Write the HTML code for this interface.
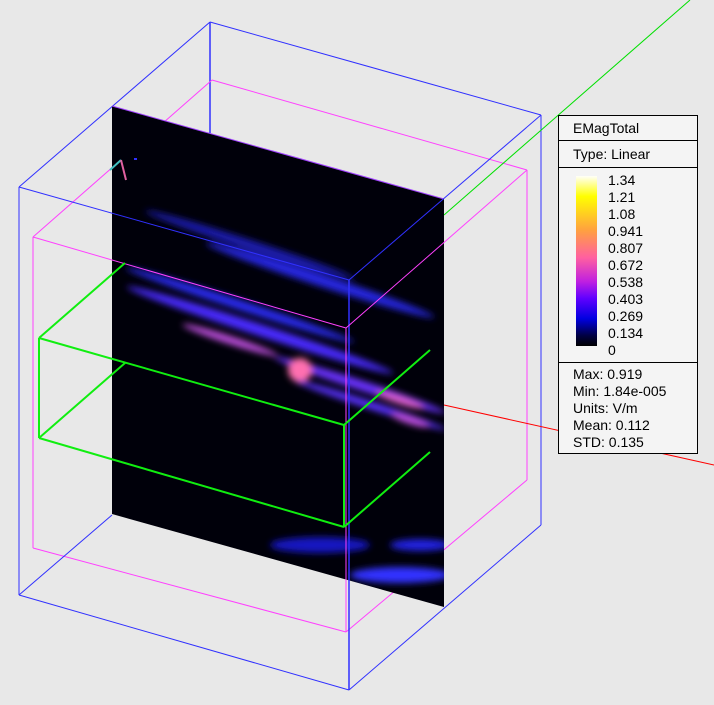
<!DOCTYPE html>
<html><head><style>
body{margin:0;background:#e8e8e8;width:714px;height:705px;overflow:hidden;position:relative;font-family:"Liberation Sans",sans-serif}
.leg{position:absolute;left:558px;top:115px;width:140px;height:339px;background:#f4f4f4;border:1px solid #000;box-sizing:border-box;font-size:14px;color:#000}
.leg div{position:absolute;left:0;right:0}
</style></head><body>
<svg width="714" height="705" style="position:absolute;left:0;top:0">
<defs>
<filter id="b" x="-20%" y="-20%" width="140%" height="140%"><feGaussianBlur stdDeviation="3.5"/></filter>
<clipPath id="c"><polygon points="112,106 444,199 444,607 112,514"/></clipPath>
</defs>
<g fill="none" stroke-width="1">
<line x1="210" y1="22" x2="541" y2="115" stroke="#3030ff"/>
<line x1="210" y1="22" x2="19" y2="187" stroke="#3030ff"/>
<line x1="210" y1="22" x2="210" y2="133" stroke="#3030ff" stroke-width="1.5"/>
<line x1="541" y1="115" x2="541" y2="525" stroke="#3030ff"/>
<line x1="212" y1="80" x2="527" y2="170" stroke="#ff40ff"/>
<line x1="212" y1="80" x2="33" y2="237" stroke="#ff40ff"/>
<line x1="527" y1="170" x2="527" y2="480" stroke="#ff40ff"/>
<line x1="527" y1="480" x2="346" y2="632" stroke="#ff40ff"/>
<line x1="33" y1="237" x2="33" y2="548" stroke="#ff40ff"/>
<line x1="33" y1="548" x2="346" y2="632" stroke="#ff40ff"/>
<line x1="19" y1="187" x2="19" y2="595" stroke="#3030ff"/>
<line x1="19" y1="595" x2="349" y2="690" stroke="#3030ff"/>
<line x1="541" y1="525" x2="349" y2="690" stroke="#3030ff"/>
<line x1="19" y1="595" x2="112" y2="515" stroke="#3030ff"/>
<line x1="444" y1="215" x2="690" y2="0" stroke="#00e000"/>
<line x1="444" y1="405" x2="714" y2="465" stroke="#ff0000"/>
</g>
<polygon points="112,106 444,199 444,607 112,514" fill="#00000a"/>
<g clip-path="url(#c)" filter="url(#b)">
<ellipse cx="250" cy="245" rx="110" ry="5" fill="#1a1ab0" transform="rotate(18 250 245)"/>
<ellipse cx="320" cy="280" rx="120" ry="6" fill="#2525e0" transform="rotate(18 320 280)"/>
<ellipse cx="240" cy="305" rx="120" ry="5" fill="#2a2af0" transform="rotate(18 240 305)"/>
<ellipse cx="260" cy="330" rx="140" ry="6" fill="#4a2cff" transform="rotate(18 260 330)"/>
<ellipse cx="230" cy="340" rx="50" ry="4" fill="#c050e0" transform="rotate(18 230 340)"/>
<ellipse cx="360" cy="385" rx="90" ry="5" fill="#6a30ff" transform="rotate(18 360 385)"/>
<ellipse cx="370" cy="405" rx="80" ry="4" fill="#5a30ff" transform="rotate(18 370 405)"/>
<ellipse cx="300" cy="370" rx="12" ry="12" fill="#ff70b0"/>
<ellipse cx="400" cy="400" rx="25" ry="4" fill="#e060d0" transform="rotate(18 400 400)"/>
<ellipse cx="410" cy="420" rx="20" ry="4" fill="#c050e0" transform="rotate(18 410 420)"/>
<ellipse cx="320" cy="545" rx="50" ry="8" fill="#1515c0"/>
<ellipse cx="400" cy="575" rx="50" ry="8" fill="#3030ff"/>
<ellipse cx="420" cy="545" rx="30" ry="6" fill="#2020e0"/>
</g>
<line x1="112" y1="106" x2="444" y2="199" stroke="#a040ff"/>
<g fill="none">
<line x1="19" y1="187" x2="349" y2="280" stroke="#3030ff"/>
<line x1="541" y1="115" x2="349" y2="280" stroke="#3030ff"/>
<line x1="349" y1="280" x2="349" y2="690" stroke="#3030ff" stroke-width="1.5"/>
<line x1="33" y1="237" x2="346" y2="328" stroke="#ff40ff"/>
<line x1="527" y1="170" x2="346" y2="328" stroke="#ff40ff"/>
<line x1="346" y1="328" x2="346" y2="632" stroke="#ff40ff"/>
<g stroke="#10ee10" stroke-width="2">
<line x1="39" y1="338" x2="344" y2="425"/>
<line x1="39" y1="338" x2="39" y2="438"/>
<line x1="39" y1="438" x2="344" y2="527"/>
<line x1="344" y1="425" x2="344" y2="527"/>
<line x1="344" y1="425" x2="430" y2="350"/>
<line x1="344" y1="527" x2="430" y2="452"/>
<line x1="39" y1="338" x2="125" y2="263"/>
<line x1="39" y1="438" x2="125" y2="363"/>
</g>
</g>
<line x1="110" y1="170" x2="121" y2="160" stroke="#40c0c0" stroke-width="2"/>
<line x1="121" y1="160" x2="126" y2="180" stroke="#e060a0" stroke-width="2"/>
<rect x="134" y="158" width="3" height="2" fill="#3030ff"/>
</svg>
<div class="leg">
<div style="top:0;height:24px;border-bottom:1px solid #000;padding-left:14px;line-height:24px">EMagTotal</div>
<div style="top:25px;height:26px;border-bottom:1px solid #000;padding-left:14px;line-height:26px">Type: Linear</div>
<div style="top:60px;left:17px;width:21px;height:170px;right:auto;background:linear-gradient(to bottom,#fffff8,#ffff00 12%,#ffa040 32%,#ff60a0 48%,#c020e0 62%,#6000ff 72%,#0000e0 84%,#000040 94%,#000)"></div>
<div style="top:56px;left:49px;line-height:17px">1.34<br>1.21<br>1.08<br>0.941<br>0.807<br>0.672<br>0.538<br>0.403<br>0.269<br>0.134<br>0</div>
<div style="top:246px;border-top:1px solid #000;padding-left:14px;padding-top:3px;line-height:17px">Max: 0.919<br>Min: 1.84e-005<br>Units: V/m<br>Mean: 0.112<br>STD: 0.135</div>
</div>
</body></html>
